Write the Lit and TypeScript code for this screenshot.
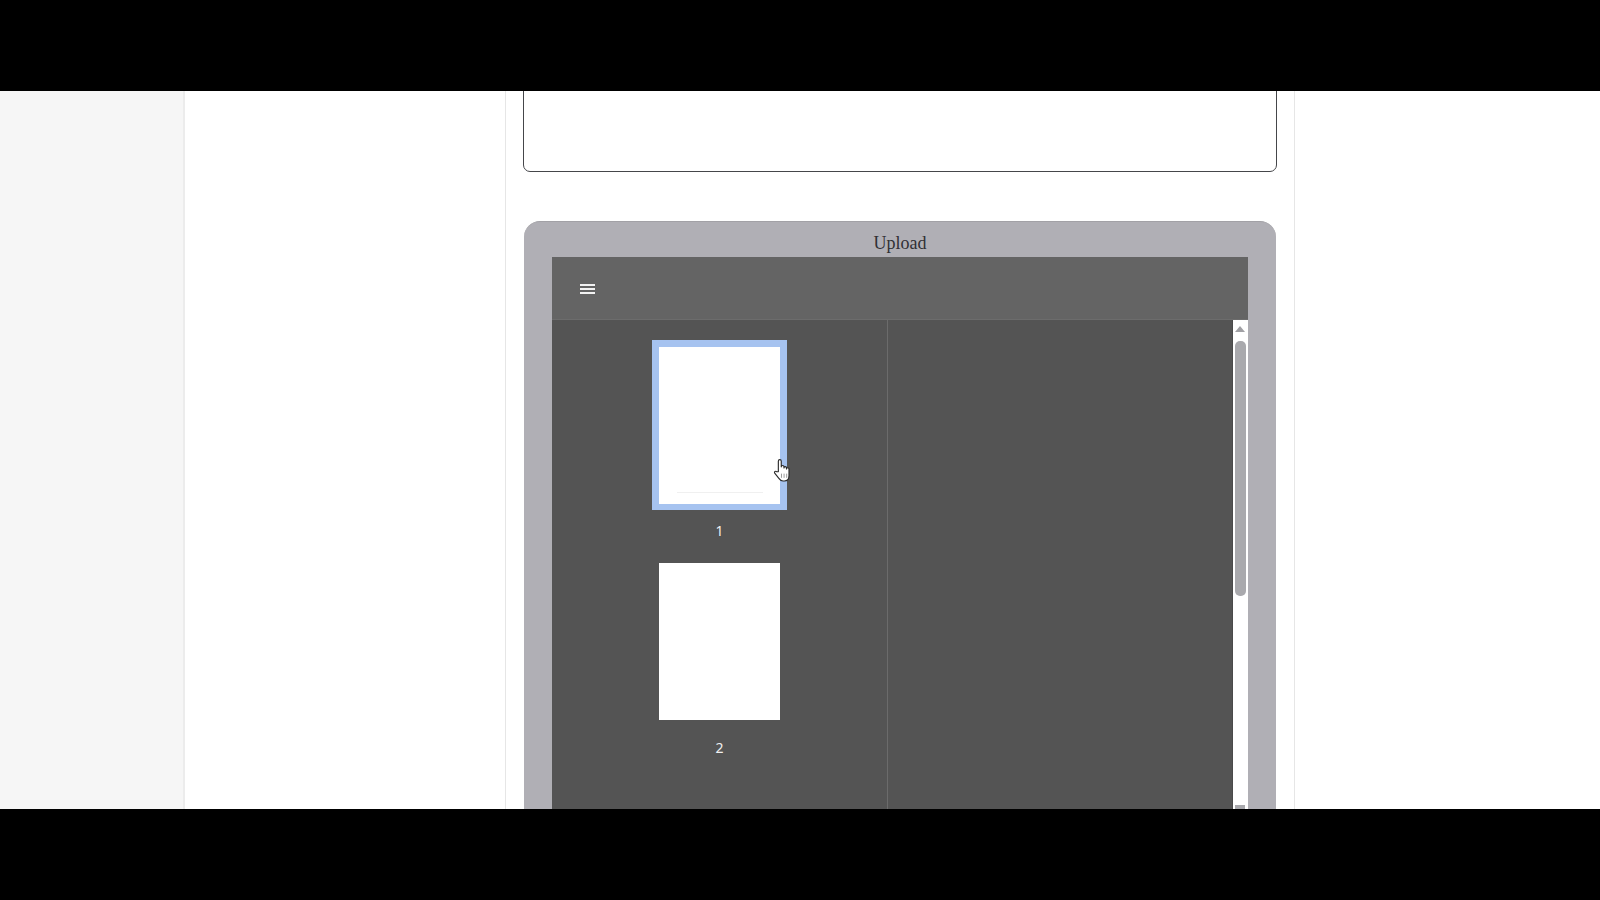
import { LitElement, html, css } from "lit";
import { customElement } from "lit/decorators.js";

@customElement("app-root")
export class AppRoot extends LitElement {
  static styles = css`
    :host { display: flex; flex-direction: column; width: 1600px; height: 900px; background: #000; overflow: hidden; font-family: "Liberation Serif", serif; }
    .band { flex: none; background: #000; }
    .band.top { height: 91px; }
    .band.bottom { height: 91px; }
    .stage { flex: 1; min-height: 0; overflow: hidden; display: flex; background: #fff; }
    .side { flex: none; width: 183px; background: #f6f6f6; border-right: 2px solid #ececec; }
    .column { flex: none; width: 790px; box-sizing: border-box; margin-left: 320px; border-left: 1px solid #e6e6e6; border-right: 1px solid #e6e6e6; padding: 0 17px; display: flex; flex-direction: column; }
    .box { flex: none; height: 91px; margin-top: -10px; border: 1px solid #45464a; border-radius: 7px; background: #fff; box-sizing: border-box; }
    .panel { flex: none; margin: 49px 1px 0; height: 640px; background: #b0afb5; border-top: 1px solid #a2a1a6; border-radius: 16px 16px 0 0; padding: 0 28px; display: flex; flex-direction: column; }
    .title { flex: none; height: 35px; line-height: 43px; text-align: center; font-size: 18px; color: #303034; }
    .viewer { flex: 1; min-height: 0; display: flex; flex-direction: column; background: #545454; }
    .bar { flex: none; height: 63px; background: #646464; border-bottom: 1px solid #6c6c6c; box-sizing: border-box; display: flex; align-items: center; padding-left: 28px; }
    .menu { display: block; width: 15px; height: 11px; margin-top: 2px; }
    .body { flex: 1; min-height: 0; display: flex; }
    .thumbs { flex: none; width: 335px; border-right: 1px solid #6b6b6b; display: flex; flex-direction: column; align-items: center; padding-top: 20px; box-sizing: content-box; }
    .item { display: flex; flex-direction: column; align-items: center; }
    .frame { position: relative; padding: 7px; background: transparent; }
    .frame.sel { background: #a6c3f0; padding-bottom: 6px; }
    .page { width: 121px; height: 157px; background: #fff; display: flex; align-items: flex-end; justify-content: center; }
    .rule { width: 86px; height: 1px; margin-bottom: 11px; background: #f0f0f0; }
    .num { font-family: "Noto Sans", "Liberation Sans", sans-serif; font-size: 14px; line-height: 18px; color: #f0f0f0; margin-top: 12px; }
    .item + .item { margin-top: 15px; }
    .item + .item .frame { padding-top: 0; padding-bottom: 0; margin-top: 8px; }
    .item + .item .num { margin-top: 19px; }
    .hand { position: absolute; left: 121px; top: 118px; width: 18px; height: 24px; }
    .main { flex: 1; min-width: 0; }
    .scroll { flex: none; width: 16px; background: #fff; display: flex; flex-direction: column; align-items: center; position: relative; border-left: 1px solid #4a4a4a; box-sizing: border-box; }
    .arrow { display: block; width: 10px; height: 6px; margin-top: 6px; margin-right: 1px; }
    .knob { width: 11px; height: 255px; margin-top: 9px; background: #a9a9ad; border-radius: 5px; }
    .foot { position: absolute; left: 2px; top: 485px; width: 10px; height: 6px; background: #a9a9ad; }
  `;

  render() {
    return html`
      <div class="band top"></div>
      <div class="stage">
        <div class="side"></div>
        <div class="column">
          <div class="box"></div>
          <div class="panel">
            <div class="title">Upload</div>
            <div class="viewer">
              <div class="bar">
                <svg class="menu" viewBox="0 0 15 11" aria-hidden="true">
                  <rect x="0" y="0" width="15" height="2" fill="#f2f2f2"></rect>
                  <rect x="0" y="4" width="15" height="2" fill="#f2f2f2"></rect>
                  <rect x="0" y="8" width="15" height="2" fill="#f2f2f2"></rect>
                </svg>
              </div>
              <div class="body">
                <div class="thumbs">
                  <div class="item">
                    <div class="frame sel">
                      <div class="page"><div class="rule"></div></div>
                      <svg class="hand" viewBox="0 0 17 23" aria-hidden="true">
                        <path d="M5 13V3a1.400 1.400 0 0 1 2.800 0v5.500a1.300 1.300 0 0 1 2.600 0v1a1.200 1.200 0 0 1 2.400 0v1a1.200 1.200 0 0 1 2.400 0V17c0 3-1.800 5-4.500 5H9.500c-2 0-3-1-4-2.500L1.500 14.500c-.8-1.200.9-2.500 2-1.300z" fill="#fff" stroke="#2b2b2b" stroke-width="1.100" stroke-linejoin="round"></path>
                        <path d="M8 15v4M10.500 15v4M13 15v4" stroke="#777" stroke-width=".7" fill="none"></path>
                      </svg>
                    </div>
                    <div class="num">1</div>
                  </div>
                  <div class="item">
                    <div class="frame"><div class="page"></div></div>
                    <div class="num">2</div>
                  </div>
                </div>
                <div class="main"></div>
                <div class="scroll">
                  <svg class="arrow" viewBox="0 0 10 6" aria-hidden="true"><path d="M5 0L10 6H0z" fill="#a0a0a4"></path></svg>
                  <div class="knob"></div>
                  <div class="foot"></div>
                </div>
              </div>
            </div>
          </div>
        </div>
      </div>
      <div class="band bottom"></div>
    `;
  }
}
